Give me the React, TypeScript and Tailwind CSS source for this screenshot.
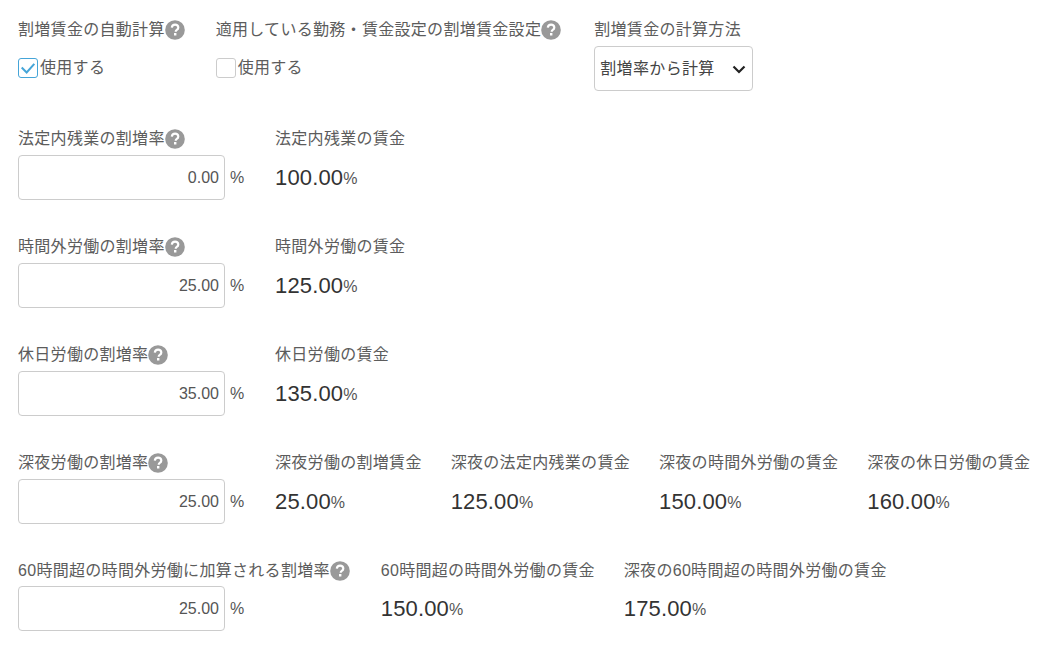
const font = '[font-family:"Liberation_Sans","Noto_Sans_CJK_JP",sans-serif]';

function Help() {
  return (
    <svg viewBox="0 0 20 20" className="w-[20px] h-[20px] shrink-0">
      <circle cx="10" cy="10" r="9.800" fill="#999" />
      <path d="M6.800 7.700c.2-1.900 1.500-3 3.300-3 1.900 0 3.200 1.100 3.200 2.700 0 1.200-.6 1.900-1.500 2.500-.9.600-1.100 1-1.100 1.900" fill="none" stroke="#fff" strokeWidth="2.200" />
      <rect x="9" y="13" width="2.400" height="2.500" fill="#fff" />
    </svg>
  );
}

function Label({ text, help }: { text: string; help?: boolean }) {
  return (
    <div className="flex items-center h-[20px] text-[16px] leading-[20px] tracking-[0.3px] text-[#5c5c5c] whitespace-nowrap">
      <span>{text}</span>
      {help && <Help />}
    </div>
  );
}

function Check({ checked }: { checked?: boolean }) {
  return (
    <div className="flex items-center h-[22px] mt-[17px] text-[16px] tracking-[0.3px] text-[#5c5c5c]">
      <span className={`w-[20px] h-[20px] mr-[2px] rounded-[3px] border flex items-center justify-center bg-white ${checked ? "border-[#45a5d8]" : "border-[#ccc]"}`}>
        {checked && (
          <svg viewBox="0 0 20 20" className="w-[18px] h-[18px]">
            <path d="M3 9.500 8.500 15 17 5.500" fill="none" stroke="#45a5d8" strokeWidth="2.200" />
          </svg>
        )}
      </span>
      使用する
    </div>
  );
}

function Rate({ label, value, tight }: { label: string; value: string; tight?: boolean }) {
  return (
    <div className={tight ? "min-w-[228px] mr-[2px]" : "min-w-[228px]"}>
      <Label text={label} help />
      <div className={`flex items-center ${tight ? "mt-[5px]" : "mt-[6px]"}`}>
        <div className="w-[207px] h-[45px] border border-[#ccc] rounded-[4px] bg-white flex items-center justify-end pr-[5px] text-[16px] text-[#555]">
          {value}
        </div>
        <span className="ml-[5px] text-[16px] text-[#555]">%</span>
      </div>
    </div>
  );
}

function Val({ label, value, tight }: { label: string; value: string; tight?: boolean }) {
  return (
    <div>
      <Label text={label} />
      <div className={`${tight ? "mt-[5px]" : "mt-[6px]"} h-[45px] flex items-center text-[22px] tracking-[0.15px] text-[#333]`}>
        {value}
        <span className="text-[16px] text-[#555] mt-[2px]">%</span>
      </div>
    </div>
  );
}

const rows = [
  { label: "法定内残業の割増率", value: "0.00", vals: [["法定内残業の賃金", "100.00"]] },
  { label: "時間外労働の割増率", value: "25.00", vals: [["時間外労働の賃金", "125.00"]] },
  { label: "休日労働の割増率", value: "35.00", vals: [["休日労働の賃金", "135.00"]] },
  {
    label: "深夜労働の割増率",
    value: "25.00",
    vals: [
      ["深夜労働の割増賃金", "25.00"],
      ["深夜の法定内残業の賃金", "125.00"],
      ["深夜の時間外労働の賃金", "150.00"],
      ["深夜の休日労働の賃金", "160.00"],
    ],
  },
  {
    label: "60時間超の時間外労働に加算される割増率",
    value: "25.00",
    tight: true,
    vals: [
      ["60時間超の時間外労働の賃金", "150.00"],
      ["深夜の60時間超の時間外労働の賃金", "175.00"],
    ],
  },
];

export default function App() {
  return (
    <div className={`${font} w-[1045px] h-[646px] bg-white overflow-hidden pl-[18px] pt-[20px]`}>
      <div className="flex gap-[31px]">
        <div>
          <Label text="割増賃金の自動計算" help />
          <Check checked />
        </div>
        <div>
          <Label text="適用している勤務・賃金設定の割増賃金設定" help />
          <Check />
        </div>
        <div className="ml-[2px]">
          <Label text="割増賃金の計算方法" />
          <div className="mt-[6px] w-[159px] h-[45px] border border-[#ccc] rounded-[4px] flex items-center justify-between pl-[5px] pr-[5px] text-[16px] tracking-[0.35px] text-[#444]">
            割増率から計算
            <svg viewBox="0 0 16 16" className="w-[16px] h-[16px]">
              <path d="M2.500 5.500 8 11l5.500-5.500" fill="none" stroke="#222" strokeWidth="2.200" />
            </svg>
          </div>
        </div>
      </div>
      <div className="mt-[38px] flex flex-col gap-[37px]">
        {rows.map((r) => (
          <div key={r.label} className="flex gap-[29px]">
            <Rate label={r.label} value={r.value} tight={r.tight} />
            {r.vals.map(([l, v]) => (
              <Val key={l} label={l} value={v} tight={r.tight} />
            ))}
          </div>
        ))}
      </div>
    </div>
  );
}
